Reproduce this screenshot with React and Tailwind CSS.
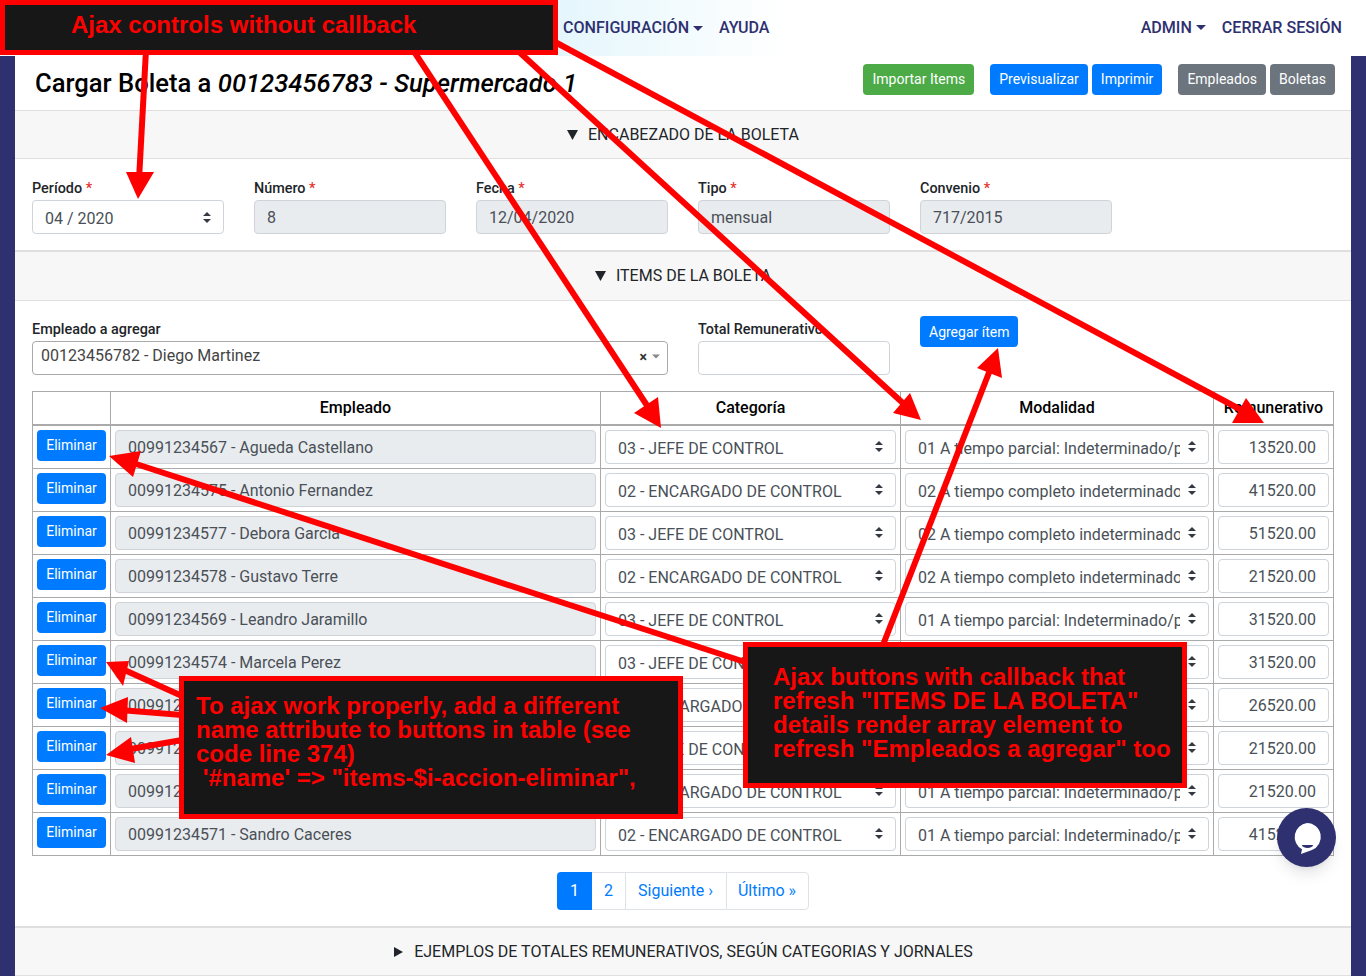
const rows = [
  { name: "00991234567 - Agueda Castellano", cat: "03 - JEFE DE CONTROL", mod: "01 A tiempo parcial: Indeterminado/parcial", rem: "13520.00" },
  { name: "00991234575 - Antonio Fernandez", cat: "02 - ENCARGADO DE CONTROL", mod: "02 A tiempo completo indeterminado", rem: "41520.00" },
  { name: "00991234577 - Debora Garcia", cat: "03 - JEFE DE CONTROL", mod: "02 A tiempo completo indeterminado", rem: "51520.00" },
  { name: "00991234578 - Gustavo Terre", cat: "02 - ENCARGADO DE CONTROL", mod: "02 A tiempo completo indeterminado", rem: "21520.00" },
  { name: "00991234569 - Leandro Jaramillo", cat: "03 - JEFE DE CONTROL", mod: "01 A tiempo parcial: Indeterminado/parcial", rem: "31520.00" },
  { name: "00991234574 - Marcela Perez", cat: "03 - JEFE DE CONTROL", mod: "01 A tiempo parcial: Indeterminado/parcial", rem: "31520.00" },
  { name: "00991234572 - Mario Gomez", cat: "02 - ENCARGADO DE CONTROL", mod: "01 A tiempo parcial: Indeterminado/parcial", rem: "26520.00" },
  { name: "00991234573 - Pablo Ruiz", cat: "03 - JEFE DE CONTROL", mod: "01 A tiempo parcial: Indeterminado/parcial", rem: "21520.00" },
  { name: "00991234570 - Rosa Diaz", cat: "02 - ENCARGADO DE CONTROL", mod: "01 A tiempo parcial: Indeterminado/parcial", rem: "21520.00" },
  { name: "00991234571 - Sandro Caceres", cat: "02 - ENCARGADO DE CONTROL", mod: "01 A tiempo parcial: Indeterminado/parcial", rem: "41520.00" },
]

const arrows = [
  { line: [146, 50, 139, 180], head: "138,199 126,172 154,172" },
  { line: [413, 50, 650, 410], head: "661,428 658,397 634,413" },
  { line: [517, 50, 905, 405], head: "921,420 910,393 893,413" },
  { line: [555, 42, 1245, 412], head: "1264,423 1246,398 1232,423" },
  { line: [883, 645, 990, 370], head: "998,348 977,368 1002,378" },
  { line: [745, 662, 130, 462], head: "109,456 141,451 133,477" },
  { line: [182, 696, 120, 668], head: "106,662 129,661 123,686" },
  { line: [182, 715, 120, 710], head: "100,708 128,697 127,723" },
  { line: [182, 740, 125, 750], head: "106,755 131,737 135,763" },
]

function Caret({ className }) {
  return (
    <svg width="10" height="5" viewBox="0 0 10 5" className={className}>
      <path d="M0 0h10L5 5z" fill="currentColor" />
    </svg>
  )
}

function Updown() {
  return (
    <svg width="8" height="11" viewBox="0 0 8 11" className="shrink-0 text-[#343a40]">
      <path d="M4 0l4 4H0zM4 11L0 7h8z" fill="currentColor" />
    </svg>
  )
}

function SectionBar({ title, open = true, className }) {
  return (
    <div className={`flex items-center justify-center gap-[10px] bg-[#f7f7f7] border-[#dfdfdf] text-[#212529] ${className}`}>
      <svg width="11" height="10" viewBox="0 0 11 10" className="shrink-0">
        {open ? <path d="M0 0h11L5.500 10z" fill="#212529" /> : <path d="M1 0l9 5-9 5z" fill="#212529" />}
      </svg>
      <span>{title}</span>
    </div>
  )
}

function Label({ children, required }) {
  return (
    <label className="block h-[22px] text-[14.4px] leading-[22px] font-medium text-[#212529] whitespace-nowrap">
      {children}
      {required && <span className="text-[#e3342f]"> *</span>}
    </label>
  )
}

function Readonly({ children, className = "" }) {
  return (
    <div className={`h-[34px] flex items-center px-[12px] pt-[2px] bg-[#e9ecef] border border-[#ced4da] rounded text-[#495057] whitespace-nowrap ${className}`}>
      {children}
    </div>
  )
}

function SelectBox({ children }) {
  return (
    <div className="h-[34px] flex items-center pl-[12px] pr-[12px] bg-white border border-[#ced4da] rounded text-[#495057]">
      <span className="flex-1 overflow-hidden whitespace-nowrap mr-[8px] pt-[5px]">{children}</span>
      <Updown />
    </div>
  )
}

function Btn({ children, color = "bg-[#007bff]", className = "" }) {
  return (
    <button className={`h-[31px] px-[9px] text-sm leading-[20px] text-white rounded ${color} ${className}`}>
      {children}
    </button>
  )
}

export default function App() {
  return (
    <div className="relative h-[978px] overflow-hidden bg-white text-base font-['Roboto',sans-serif]">
      <nav className="h-14 flex items-center bg-white font-medium text-[16.08px] text-[#2e3070]">
        <div className="w-[556px]" />
        <div className="h-14 w-[230px] flex items-center pl-[7px] bg-gradient-to-r from-[#e4f6fc] to-white">
          <span>CONFIGURACIÓN</span>
          <Caret className="ml-[4px]" />
          <span className="ml-[16px]">AYUDA</span>
        </div>
        <div className="ml-auto flex items-center pr-[24px]">
          <span>ADMIN</span>
          <Caret className="ml-[4px]" />
          <span className="ml-[16px]">CERRAR SESIÓN</span>
        </div>
      </nav>

      <div className="flex">
        <div className="w-[15px] shrink-0 bg-[#2e3070]" />
        <main className="flex-1 min-w-0">
          <div className="h-[54px] flex items-center pl-[20px] pr-[16px]">
            <h3 className="pt-[2px] text-[25.6px] font-medium text-black leading-none whitespace-nowrap">
              Cargar Boleta a <em>00123456783 - Supermercado 1</em>
            </h3>
            <div className="ml-auto flex items-center -mt-[8px]">
              <Btn color="bg-[#4caa47]">Importar Items</Btn>
              <Btn className="ml-[16px]">Previsualizar</Btn>
              <Btn className="ml-[4px]">Imprimir</Btn>
              <Btn color="bg-[#6c757d]" className="ml-[16px]">Empleados</Btn>
              <Btn color="bg-[#6c757d]" className="ml-[4px]">Boletas</Btn>
            </div>
          </div>

          <SectionBar title="ENCABEZADO DE LA BOLETA" className="h-[49px] border-y" />

          <div className="h-[91px] pt-[19px] px-[17px] flex gap-[30px]">
            <div className="w-[192px]">
              <Label required>Período</Label>
              <div className="h-[34px] flex items-center justify-between pl-[12px] pr-[12px] border border-[#ced4da] rounded text-[#495057]">
                <span className="pt-[3px]">04 / 2020</span>
                <Updown />
              </div>
            </div>
            <div className="w-[192px]">
              <Label required>Número</Label>
              <Readonly>8</Readonly>
            </div>
            <div className="w-[192px]">
              <Label required>Fecha</Label>
              <Readonly>12/04/2020</Readonly>
            </div>
            <div className="w-[192px]">
              <Label required>Tipo</Label>
              <Readonly>mensual</Readonly>
            </div>
            <div className="w-[192px]">
              <Label required>Convenio</Label>
              <Readonly>717/2015</Readonly>
            </div>
          </div>

          <SectionBar title="ITEMS DE LA BOLETA" className="h-[51px] border-t-2 border-b" />

          <div className="px-[17px] pt-[18px] h-[90px] flex gap-[30px]">
            <div className="w-[636px]">
              <Label>Empleado a agregar</Label>
              <div className="h-[34px] flex items-center pl-[8px] pr-[7px] border border-[#aaaaaa] rounded text-[#444444]">
                <span className="flex-1 -mt-[4px]">00123456782 - Diego Martinez</span>
                <span className="text-sm font-bold text-[#333333] leading-none -mt-[3px]">×</span>
                <Caret className="ml-[5px] -mt-[3px] text-[#888888] w-[8px]" />
              </div>
            </div>
            <div className="w-[192px]">
              <Label>Total Remunerativo</Label>
              <div className="h-[34px] border border-[#ced4da] rounded bg-white" />
            </div>
            <div className="-mt-[3px]">
              <Btn className="px-[9.5px]">Agregar ítem</Btn>
            </div>
          </div>

          <div className="px-[17px]">
            <table className="w-full table-fixed border-collapse border border-[#aaaaaa]">
              <thead>
                <tr className="h-[33px]">
                  <th className="w-[78px] border border-b-2 border-[#aaaaaa]" />
                  <th className="w-[490px] border border-b-2 border-[#aaaaaa] font-medium">Empleado</th>
                  <th className="w-[300px] border border-b-2 border-[#aaaaaa] font-medium">Categoría</th>
                  <th className="w-[313px] border border-b-2 border-[#aaaaaa] font-medium">Modalidad</th>
                  <th className="border border-b-2 border-[#aaaaaa] font-medium">Remunerativo</th>
                </tr>
              </thead>
              <tbody>
                {rows.map((r) => (
                  <tr key={r.name}>
                    <td className="border border-[#aaaaaa] p-1 align-top">
                      <Btn className="block w-full px-0">Eliminar</Btn>
                    </td>
                    <td className="border border-[#aaaaaa] p-1">
                      <Readonly>{r.name}</Readonly>
                    </td>
                    <td className="border border-[#aaaaaa] p-1">
                      <SelectBox>{r.cat}</SelectBox>
                    </td>
                    <td className="border border-[#aaaaaa] p-1">
                      <SelectBox>{r.mod}</SelectBox>
                    </td>
                    <td className="border border-[#aaaaaa] p-1">
                      <div className="h-[34px] flex items-center justify-end px-[12px] pt-[2px] border border-[#ced4da] rounded text-[#495057]">
                        {r.rem}
                      </div>
                    </td>
                  </tr>
                ))}
              </tbody>
            </table>
          </div>

          <div className="h-[70px] pt-[16px] flex justify-center">
            <div className="h-[38px] flex text-[#007bff]">
              <span className="w-[35px] flex items-center justify-center rounded-l bg-[#007bff] text-white">1</span>
              <span className="w-[33px] flex items-center justify-center border-y border-[#dee2e6]">2</span>
              <span className="w-[101px] flex items-center justify-center pr-[1px] border border-r-0 border-[#dee2e6]">Siguiente ›</span>
              <span className="w-[83px] flex items-center justify-center pr-[1px] border border-[#dee2e6] rounded-r">Último »</span>
            </div>
          </div>

          <SectionBar
            title="EJEMPLOS DE TOTALES REMUNERATIVOS, SEGÚN CATEGORIAS Y JORNALES"
            open={false}
            className="h-[50px] pt-[2px] border-t-2 border-b"
          />
        </main>
        <div className="w-[15px] shrink-0 bg-[#2e3070]" />
      </div>

      {/* annotations drawn over the page */}
      <svg width="1366" height="978" className="absolute left-0 top-0 pointer-events-none">
        {arrows.map((a, i) => (
          <g key={i}>
            <line x1={a.line[0]} y1={a.line[1]} x2={a.line[2]} y2={a.line[3]} stroke="#ff0000" strokeWidth="6" />
            <polygon points={a.head} fill="#ff0000" />
          </g>
        ))}
      </svg>

      <div className="absolute left-0 top-0 w-[558px] h-[55px] border-[5px] border-[#ff0000] bg-[#171717] pl-[66px] font-['Liberation_Sans',sans-serif] font-bold text-[24px] leading-[40px] text-[#ff0000]">
        Ajax controls without callback
      </div>

      <div className="absolute left-[179px] top-[676px] w-[504px] h-[143px] border-[5px] border-[#ff0000] bg-[#171717] pl-[12px] pt-[13px] font-['Liberation_Sans',sans-serif] font-bold text-[24px] leading-[24px] text-[#ff0000] whitespace-nowrap">
        To ajax work properly, add a different
        <br />
        name attribute to buttons in table (see
        <br />
        code line 374)
        <br />
        &nbsp;'#name' =&gt; "items-$i-accion-eliminar",
      </div>

      <div className="absolute left-[743px] top-[642px] w-[444px] h-[146px] border-[5px] border-[#ff0000] bg-[#171717] pl-[25px] pt-[18px] font-['Liberation_Sans',sans-serif] font-bold text-[24px] leading-[24px] text-[#ff0000] whitespace-nowrap">
        Ajax buttons with callback that
        <br />
        refresh "ITEMS DE LA BOLETA"
        <br />
        details render array element to
        <br />
        refresh "Empleados a agregar" too
      </div>

      <div className="absolute left-[1277px] top-[808px] w-[59px] h-[59px] rounded-full bg-[#2e3070] shadow-lg flex items-center justify-center">
        <svg width="34" height="34" viewBox="0 0 34 34">
          <path d="M17 2a14 14 0 0 1 5 27L11 33l1-4.800A14 14 0 0 1 17 2z" fill="#ffffff" />
          <path d="M12 24h11a5.500 3 0 0 1-11 0z" fill="#2e3070" />
        </svg>
      </div>
    </div>
  )
}
